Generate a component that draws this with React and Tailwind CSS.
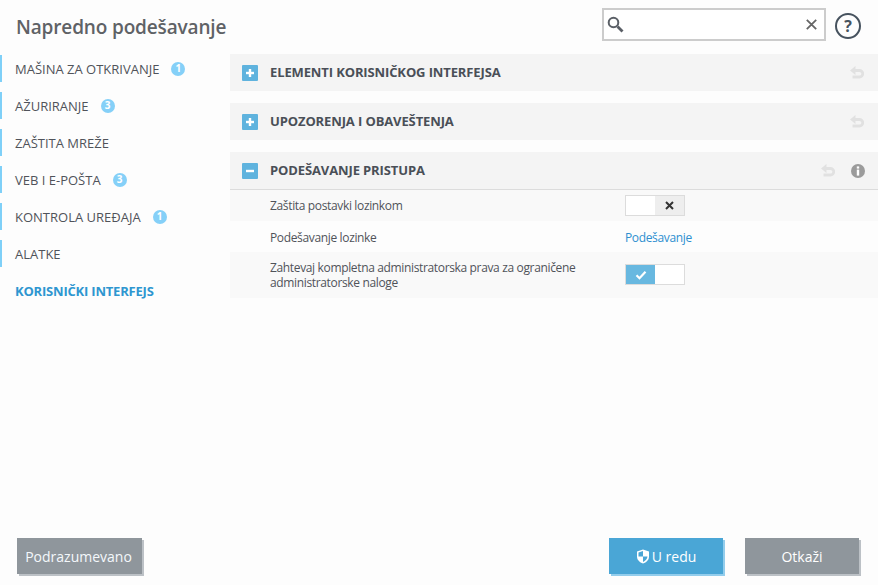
import { useState } from 'react'

const navItems = [
  { label: 'MAŠINA ZA OTKRIVANJE', badge: 1 },
  { label: 'AŽURIRANJE', badge: 3 },
  { label: 'ZAŠTITA MREŽE' },
  { label: 'VEB I E-POŠTA', badge: 3 },
  { label: 'KONTROLA UREĐAJA', badge: 1 },
  { label: 'ALATKE' },
]

function RevertIcon() {
  return (
    <svg width="14" height="13" viewBox="0 0 14 13" fill="none" stroke="#e1e1e1" strokeWidth="2.8">
      <path d="M3 4.500h6.500a3 3 0 0 1 0 6.500H2.500" />
      <path d="M5.500 0v9L0 4.500z" fill="#e1e1e1" stroke="none" />
    </svg>
  )
}

function SectionHeader({ title, open }) {
  return (
    <div className={`flex h-[37px] items-center bg-[#f4f4f4] pl-[12px] ${open ? 'h-[38px] border-b border-[#dcdcdc]' : ''}`}>
      <div className="flex size-4 items-center justify-center rounded-[1px] bg-[#5fb3de]">
        <svg width="10" height="10" viewBox="0 0 10 10" fill="#fff">
          <rect x="1" y="3.8" width="8" height="2.4" />
          {!open && <rect x="3.8" y="1" width="2.4" height="8" />}
        </svg>
      </div>
      <div className="ml-[12px] pt-px text-[13px] font-bold tracking-[-0.12px] text-[#4a4f57]">{title}</div>
      <div className={`ml-auto flex items-center gap-[16px] pr-[13px] ${open ? '' : 'pr-[14px]'}`}>
        <RevertIcon />
        {open && (
          <svg width="14" height="14" viewBox="0 0 14 14">
            <circle cx="7" cy="7" r="7" fill="#9b9b9b" />
            <rect x="5.8" y="2.4" width="2.4" height="2.2" fill="#fff" />
            <rect x="5.8" y="5.6" width="2.4" height="6" fill="#fff" />
          </svg>
        )}
      </div>
    </div>
  )
}

function Toggle({ on, onClick, className }) {
  return (
    <button onClick={onClick} className={`flex h-[21px] w-[60px] border border-[#dcdcdc] bg-white ${className || ''}`}>
      {on ? (
        <>
          <span className="flex h-full w-[29px] items-center justify-center bg-[#68b8e0]">
            <svg width="12" height="10" viewBox="0 0 12 10" fill="none" stroke="#fff" strokeWidth="2.2">
              <path d="M1.5 5.2l3 3 6-6.5" />
            </svg>
          </span>
          <span className="flex-1 bg-white" />
        </>
      ) : (
        <>
          <span className="w-[29px] bg-white" />
          <span className="flex h-full flex-1 items-center justify-center bg-[#eeeeee]">
            <svg width="9" height="9" viewBox="0 0 9 9" fill="none" stroke="#333" strokeWidth="2">
              <path d="M1 1l7 7M8 1l-7 7" />
            </svg>
          </span>
        </>
      )}
    </button>
  )
}

export default function App() {
  const [protect, setProtect] = useState(false)
  const [admin, setAdmin] = useState(true)

  return (
    <div className="flex h-[585px] w-[878px] flex-col overflow-hidden bg-[#fdfdfd] font-['Open_Sans',sans-serif]">

      {/* Header */}
      <div className="flex h-[54px] shrink-0 items-start">
        <div className="mt-[14px] ml-[16px] text-[19px] font-semibold leading-[26px] tracking-[-0.15px] text-[#5f6266]">
          Napredno podešavanje
        </div>
        <div className="mt-[8px] ml-auto flex h-[33px] w-[224px] items-center border-2 border-[#cccccc] bg-white pr-[7px] pl-[3px]">
          <svg width="17" height="17" viewBox="0 0 17 17" fill="none">
            <circle cx="6.5" cy="6.5" r="4.8" stroke="#5a5f66" strokeWidth="2" />
            <path d="M10.5 10.5l5 5" stroke="#5a5f66" strokeWidth="2.8" />
          </svg>
          <svg className="ml-auto" width="11" height="11" viewBox="0 0 11 11" fill="none" stroke="#666" strokeWidth="1.8">
            <path d="M0.8 0.8l9.4 9.4M10.2 0.8l-9.4 9.4" />
          </svg>
        </div>
        <div className="mt-[13px] mr-[17px] ml-[9px] flex size-[26px] items-center justify-center rounded-full border-2 border-[#46525e] text-[16px] font-bold text-[#46525e]">
          ?
        </div>
      </div>

      <div className="flex flex-1">
        {/* Sidebar */}
        <div className="w-[230px] shrink-0 pt-px">
          {navItems.map(item => (
            <div key={item.label} className="mb-[10px] flex h-[27px] items-center border-l-2 border-[#7fd0f8] pl-[13px]">
              <span className="pt-[2px] text-[13px] text-[#50535a]">{item.label}</span>
              {item.badge && (
                <span className="ml-[12px] flex size-[14px] items-center justify-center rounded-full bg-[#85d0f8] text-[10px] font-bold text-white">
                  {item.badge}
                </span>
              )}
            </div>
          ))}
          <div className="flex h-[27px] items-center pt-[2px] pl-[15px] text-[13px] font-bold tracking-[-0.2px] text-[#2e96d0]">
            KORISNIČKI INTERFEJS
          </div>
        </div>

        {/* Content */}
        <div className="flex-1">
          <SectionHeader title="ELEMENTI KORISNIČKOG INTERFEJSA" />
          <div className="mt-[12px]">
            <SectionHeader title="UPOZORENJA I OBAVEŠTENJA" />
          </div>
          <div className="mt-[12px]">
            <SectionHeader title="PODEŠAVANJE PRISTUPA" open />
          </div>
          <div className="text-[12px] leading-[15px] tracking-[-0.35px] text-[#50535a]">
            <div className="flex h-[31px] items-center bg-[#f9f9f9] pl-[40px]">
              <div className="w-[355px]">Zaštita postavki lozinkom</div>
              <Toggle on={protect} onClick={() => setProtect(!protect)} />
            </div>
            <div className="flex h-[31px] items-center bg-[#fdfdfd] pl-[40px]">
              <div className="w-[355px] pt-px">Podešavanje lozinke</div>
              <a className="pt-px text-[#2e8fd0]">Podešavanje</a>
            </div>
            <div className="flex h-[46px] items-center bg-[#f9f9f9] pl-[40px]">
              <div className="w-[355px]">Zahtevaj kompletna administratorska prava za ograničene administratorske naloge</div>
              <Toggle on={admin} onClick={() => setAdmin(!admin)} className="mb-px" />
            </div>
          </div>
        </div>
      </div>

      {/* Footer */}
      <div className="flex h-[47px] shrink-0 items-start pl-[17px] text-[14px] text-white">
        <button className="h-9 w-[125px] pr-[2px] bg-[#8f969c] text-[#f4f8fb] shadow-[2px_2px_0_#bcc1c6]">Podrazumevano</button>
        <button className="ml-auto flex h-9 w-[114px] items-center justify-center gap-[2px] bg-[#4aa6d6] shadow-[2px_2px_0_#93cdec]">
          <svg width="14" height="15" viewBox="0 0 14 15">
            <path d="M7 0.5l6 2v5c0 3.5-2.6 5.8-6 7-3.4-1.2-6-3.5-6-7v-5z" fill="#fff" />
            <path d="M7 2v5.5h4.5c-.2 2.7-2.2 4.4-4.5 5.4V7.500H2.500V3.500z" fill="#4aa6d6" />
          </svg>
          U redu
        </button>
        <button className="mr-[19px] ml-[22px] h-9 w-[114px] bg-[#8f969c] shadow-[2px_2px_0_#bcc1c6]">Otkaži</button>
      </div>
    </div>
  )
}
